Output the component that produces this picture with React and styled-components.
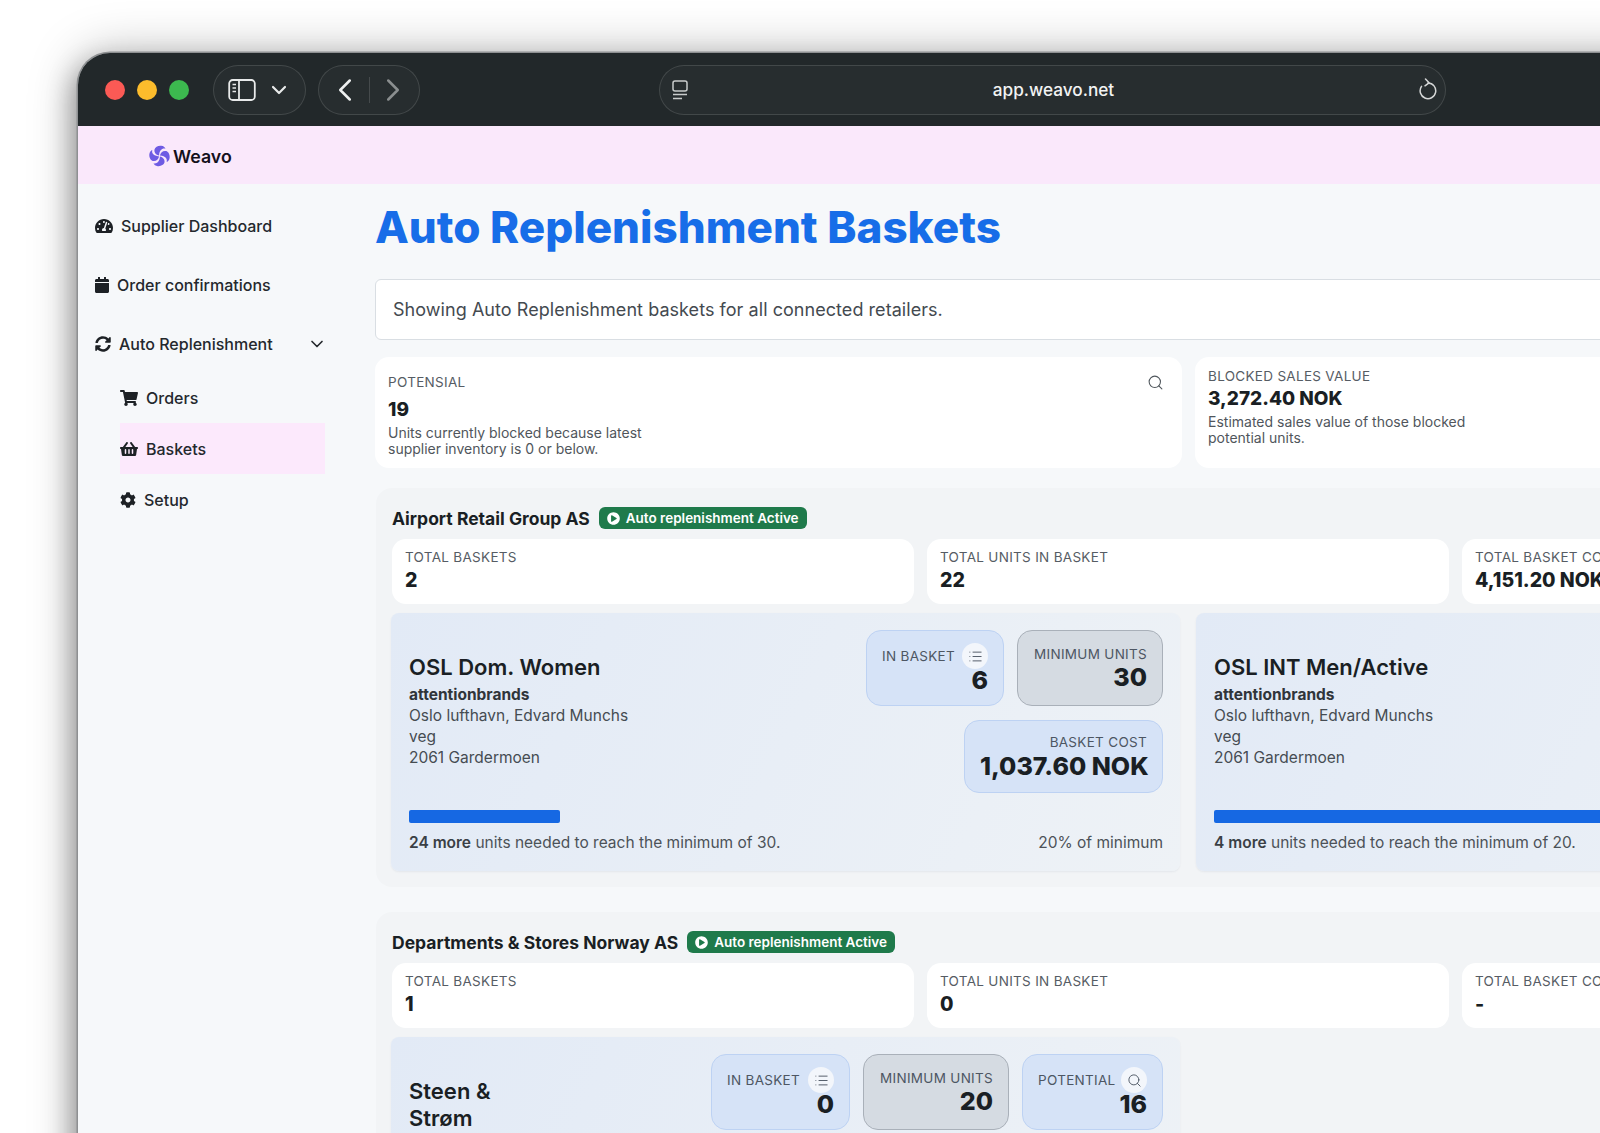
import React from 'react';
import styled, { createGlobalStyle } from 'styled-components';
import { ChevronDown, ChevronLeft, ChevronRight, List, Search } from 'lucide-react';
import { FaCalendar, FaCog, FaPlayCircle, FaShoppingBasket, FaShoppingCart, FaSyncAlt, FaTachometerAlt } from 'react-icons/fa';

const GlobalStyle = createGlobalStyle`
  html, body {
    margin: 0;
    padding: 0;
    background: #fff;
    font-family: Inter, "Noto Sans", sans-serif;
    color: #1c2126;
  }
`;

const Page = styled.div`
  width: 1600px;
  height: 1133px;
  overflow: hidden;
  box-sizing: border-box;
  padding: 53px 0 0 78px;
  background: #fff;
`;

const Browser = styled.div`
  width: 1960px;
  min-height: 1200px;
  border-radius: 32px 32px 0 0;
  box-shadow: 0 0 0 1.5px #8e9092, 0 0 50px rgba(0, 0, 0, 0.28), -6px 10px 26px rgba(0, 0, 0, 0.3);
  background: #f6f8fa;
  overflow: hidden;
`;

const TitleBar = styled.div`
  height: 73px;
  box-sizing: border-box;
  display: flex;
  align-items: center;
  padding-left: 27px;
  background: #22282a;
  color: #e8eaea;
`;

const Dot = styled.span`
  width: 20px;
  height: 20px;
  margin-right: 12px;
  border-radius: 50%;
  background: ${p => p.$color};
`;

const Pill = styled.div`
  height: 50px;
  box-sizing: border-box;
  display: flex;
  align-items: center;
  margin-left: ${p => p.$gap}px;
  width: ${p => p.$width}px;
  padding: 0 ${p => p.$pad}px;
  justify-content: space-between;
  border: 1px solid rgba(255, 255, 255, 0.13);
  border-radius: 25px;
  background: #272d2f;
`;

const NavArrow = styled.span`
  display: flex;
  margin: 0 -9px;
  color: ${p => p.$color};
`;

const NavDivider = styled.span`
  width: 1px;
  height: 26px;
  background: rgba(255, 255, 255, 0.14);
`;

const UrlText = styled.span`
  font-size: 17.2px;
  font-weight: 500;
  color: #f2f3f3;
`;

const ReloadSvg = styled.svg`
  margin: -2px -4px 0 0;
`;

const BrandBar = styled.div`
  height: 58px;
  box-sizing: border-box;
  padding: 2px 0 0 71px;
  display: flex;
  align-items: center;
  gap: 3px;
  background: #fae8fb;
`;

const BrandName = styled.span`
  font-size: 17.8px;
  font-weight: 600;
  color: #14101c;
`;

const Body = styled.div`
  display: flex;
`;

const Sidebar = styled.nav`
  width: 297px;
  flex: none;
  box-sizing: border-box;
  padding: 24px 0 0 17px;
`;

const NavItem = styled.div`
  width: 232px;
  height: 36px;
  margin-bottom: 23px;
  display: flex;
  align-items: center;
  gap: 8px;
  font-size: 16px;
  font-weight: 500;
  color: #24282d;
`;

const NavIcon = styled.span`
  display: flex;
  flex: none;
  color: #1d2125;

  svg {
    width: ${p => p.$width}px;
    height: 16px;
  }
`;

const NavChevron = styled(ChevronDown)`
  margin-left: auto;
`;

const SubList = styled.div`
  margin: -13px 0 0 25px;
`;

const SubItem = styled(NavItem)`
  width: 205px;
  height: 51px;
  margin: 0;
  background: ${p => (p.$active ? '#fce9fc' : 'transparent')};
`;

const Main = styled.main`
  flex: 1;
  min-width: 0;
`;

const Title = styled.h1`
  margin: 17px 0 26px;
  font-size: 44px;
  line-height: 52px;
  font-weight: 800;
  color: #176de8;
`;

const Notice = styled.div`
  height: 61px;
  box-sizing: border-box;
  display: flex;
  align-items: center;
  padding-left: 17px;
  margin-bottom: 17px;
  font-size: 18px;
  letter-spacing: 0.05px;
  color: #444a50;
  background: #fff;
  border: 1px solid #d9dee3;
  border-radius: 6px;
`;

const SummaryGrid = styled.div`
  display: grid;
  grid-template-columns: 807px 807px;
  gap: 13px;
  margin-bottom: 20px;
`;

const SummaryCard = styled.div`
  box-sizing: border-box;
  min-height: 111px;
  padding: 11px 13px;
  background: #fff;
  border-radius: 14px;
`;

const CardHead = styled.div`
  display: flex;
  justify-content: space-between;
  align-items: center;
  margin-bottom: ${p => p.$space || 0}px;
  color: #4f565c;
`;

const Label = styled.div`
  font-size: 13.5px;
  line-height: 16px;
  letter-spacing: 0.3px;
  white-space: nowrap;
  text-transform: uppercase;
  color: #565c64;
`;

const SummaryValue = styled.div`
  font-size: 19px;
  line-height: 28px;
  font-weight: 800;
  color: #1a1f24;
`;

const SummaryNote = styled.div`
  width: 285px;
  margin-top: 1px;
  font-size: 14px;
  line-height: 16px;
  color: #50565c;
`;

const SearchCircle = styled.span`
  width: 28px;
  height: 28px;
  display: flex;
  align-items: center;
  justify-content: center;
`;

const Group = styled.section`
  width: 1624px;
  box-sizing: border-box;
  margin: 0 0 25px 1px;
  padding: 19px 16px 16px;
  background: #f2f4f6;
  border-radius: 16px;
`;

const GroupHead = styled.div`
  height: 22px;
  display: flex;
  align-items: center;
  gap: 9px;
  margin-bottom: 10px;
`;

const GroupName = styled.h2`
  margin: 0;
  font-size: 17.5px;
  font-weight: 700;
  color: #1a1f24;
`;

const Badge = styled.span`
  height: 22px;
  display: flex;
  align-items: center;
  gap: 6px;
  padding: 0 8px;
  font-size: 13.5px;
  font-weight: 600;
  color: #fff;
  background: #1f7a4b;
  border-radius: 6px;
`;

const StatRow = styled.div`
  display: grid;
  grid-template-columns: repeat(3, 522px);
  gap: 13px;
  margin-bottom: 9px;
`;

const StatCard = styled.div`
  height: 65px;
  box-sizing: border-box;
  padding: 10px 13px;
  background: #fff;
  border-radius: 14px;
`;

const StatValue = styled.div`
  margin-top: 2px;
  font-size: 19.5px;
  line-height: 26px;
  font-weight: 800;
  color: #1a1f24;
`;

const BasketGrid = styled.div`
  display: grid;
  grid-template-columns: repeat(2, 789px);
  gap: 16px;
  margin-left: -1px;
`;

const BasketCard = styled.article`
  box-sizing: border-box;
  padding: 17px 17px 19px 18px;
  background: linear-gradient(115deg, #e2eaf6, #eef2f6);
  border-radius: 8px;
  box-shadow: 0 1px 2px rgba(60, 80, 110, 0.08);
`;

const BasketTop = styled.div`
  display: flex;
  justify-content: space-between;
  height: 163px;
`;

const BasketInfo = styled.div`
  padding-top: 24px;
  font-size: 15.5px;
  line-height: 21px;
  color: #464c52;
`;

const BasketName = styled.h3`
  margin: 0 0 3px;
  font-size: 22px;
  line-height: 27px;
  font-weight: 600;
  color: #1a1f24;
`;

const Brand = styled.div`
  font-weight: 700;
  color: #30353a;
`;

const Tiles = styled.div`
  flex: none;
  width: ${p => p.$width}px;
  display: flex;
  flex-wrap: wrap;
  justify-content: flex-end;
  align-content: flex-start;
  gap: 14px 13px;
`;

const Tile = styled.div`
  width: ${p => p.$width}px;
  height: ${p => (p.$short ? 73 : 76)}px;
  box-sizing: border-box;
  display: flex;
  flex-direction: column;
  justify-content: center;
  gap: ${p => (p.$icon ? 0 : p.$short ? 3 : 2)}px;
  padding: 0 15px;
  text-align: right;
  border-radius: 15px;
  border: 1px solid ${p => (p.$grey ? '#a9b0b9' : '#bdd2f3')};
  background: ${p => (p.$grey ? '#d5dbe2' : '#d6e3f7')};
`;

const TileHead = styled.div`
  height: 26px;
  margin-bottom: -2px;
  display: flex;
  align-items: center;
  justify-content: space-between;
`;

const TileLabel = styled(Label)`
  color: #4d5663;
`;

const TileIcon = styled.span`
  width: 26px;
  height: 26px;
  display: flex;
  align-items: center;
  justify-content: center;
  border-radius: 50%;
  color: #4d5663;
  background: #f3f6fb;
`;

const TileValue = styled.div`
  font-size: 25px;
  line-height: 26px;
  font-weight: 800;
  white-space: nowrap;
  color: #1a1f24;
`;

const Progress = styled.div`
  height: 13px;
  margin: 17px 0 11px;
`;

const ProgressFill = styled.div`
  height: 100%;
  background: #1668e3;
  border-radius: 2px;
`;

const BasketFoot = styled.div`
  display: flex;
  justify-content: space-between;
  font-size: 15.5px;
  line-height: 18px;
  color: #4c5258;

  b {
    font-weight: 600;
    color: #3a3f45;
  }
`;

const WeavoLogo = () => (
  <svg width="21" height="22" viewBox="0 0 24 24" fill="#6e5be3">
    {[0, 90, 180, 270].map(angle => (
      <path
        key={angle}
        transform={`rotate(${angle} 12 12)`}
        d="M11.500 11.500C8 10.800 5.600 8 6.300 4.500 7 1.800 10.500 0 14 .4c2.500.3 4.300 1.700 4.800 3.400-3.300-1-6.800 1-7.300 7.700Z"
      />
    ))}
  </svg>
);

const SidebarToggleIcon = () => (
  <svg width="28" height="22" viewBox="0 0 28 22" fill="none" stroke="#e8eaea" strokeWidth="1.8">
    <rect x="1.200" y="1" width="25.600" height="20" rx="3.500" />
    <path d="M11 1v20" />
    <path d="M4.500 5.500h3.500M4.500 9h3.500M4.500 12.500h3.500" strokeWidth="1.400" />
  </svg>
);

const ReaderIcon = () => (
  <svg width="16" height="20" viewBox="0 0 16 20" fill="none" stroke="#c9cccc" strokeWidth="1.500">
    <rect x="1" y="1" width="14" height="10" rx="2" />
    <path d="M1 14.500h14M1 18.500h9" />
  </svg>
);

const ReloadIcon = () => (
  <ReloadSvg width="18" height="22" viewBox="0 0 18 22" fill="none" stroke="#d4d6d6" strokeWidth="1.500" strokeLinecap="round" strokeLinejoin="round">
    <path d="M9 5a7.800 7.800 0 1 1-6.500 3.400" />
    <path d="M6.500 1 10 4.800 6 7.800" />
  </ReloadSvg>
);

const groups = [
  {
    name: 'Airport Retail Group AS',
    stats: [['Total baskets', '2'], ['Total units in basket', '22'], ['Total basket cost', '4,151.20 NOK']],
    baskets: [
      {
        name: 'OSL Dom. Women', tilesWidth: 297, more: 24, min: 30, percent: 20,
        tiles: [
          { label: 'In basket', value: '6', icon: 'list', width: 138 },
          { label: 'Minimum units', value: '30', grey: true, width: 146 },
          { label: 'Basket cost', value: '1,037.60 NOK', short: true, width: 199 },
        ],
      },
      {
        name: 'OSL INT Men/Active', tilesWidth: 297, more: 4, min: 20, percent: 80,
        tiles: [
          { label: 'In basket', value: '16', icon: 'list', width: 138 },
          { label: 'Minimum units', value: '20', grey: true, width: 146 },
          { label: 'Basket cost', value: '3,113.60 NOK', short: true, width: 199 },
        ],
      },
    ],
  },
  {
    name: 'Departments & Stores Norway AS',
    stats: [['Total baskets', '1'], ['Total units in basket', '0'], ['Total basket cost', '-']],
    baskets: [
      {
        name: <>Steen &<br />Strøm</>, tilesWidth: 452, more: 20, min: 20, percent: 0,
        tiles: [
          { label: 'In basket', value: '0', icon: 'list', width: 139 },
          { label: 'Minimum units', value: '20', grey: true, width: 146 },
          { label: 'Potential', value: '16', icon: 'search', width: 141 },
        ],
      },
    ],
  },
];

const Basket = ({ basket }) => (
  <BasketCard>
    <BasketTop>
      <BasketInfo>
        <BasketName>{basket.name}</BasketName>
        <Brand>attentionbrands</Brand>
        Oslo lufthavn, Edvard Munchs<br />veg<br />2061 Gardermoen
      </BasketInfo>
      <Tiles $width={basket.tilesWidth}>
        {basket.tiles.map(tile => (
          <Tile key={tile.label} $width={tile.width} $grey={tile.grey} $short={tile.short} $icon={tile.icon}>
            {tile.icon ? (
              <TileHead>
                <TileLabel>{tile.label}</TileLabel>
                <TileIcon>
                  {tile.icon === 'list' ? <List size={15} strokeWidth={1.5} /> : <Search size={15} strokeWidth={1.5} />}
                </TileIcon>
              </TileHead>
            ) : (
              <TileLabel>{tile.label}</TileLabel>
            )}
            <TileValue>{tile.value}</TileValue>
          </Tile>
        ))}
      </Tiles>
    </BasketTop>
    <Progress>
      <ProgressFill style={{ width: `${basket.percent}%` }} />
    </Progress>
    <BasketFoot>
      <span><b>{basket.more} more</b> units needed to reach the minimum of {basket.min}.</span>
      <span>{basket.percent}% of minimum</span>
    </BasketFoot>
  </BasketCard>
);

export default function App() {
  return (
    <Page>
      <GlobalStyle />
      <Browser>
        <TitleBar>
          <Dot $color="#fb5a55" />
          <Dot $color="#fcbc2c" />
          <Dot $color="#3cb94f" />
          <Pill $gap={12} $width={93} $pad={14}>
            <SidebarToggleIcon />
            <ChevronDown size={24} strokeWidth={2.2} />
          </Pill>
          <Pill $gap={12} $width={102} $pad={16}>
            <NavArrow $color="#eef0f0"><ChevronLeft size={38} strokeWidth={1.6} /></NavArrow>
            <NavDivider />
            <NavArrow $color="#8a8e8f"><ChevronRight size={38} strokeWidth={1.6} /></NavArrow>
          </Pill>
          <Pill $gap={239} $width={787} $pad={12}>
            <ReaderIcon />
            <UrlText>app.weavo.net</UrlText>
            <ReloadIcon />
          </Pill>
        </TitleBar>
        <BrandBar>
          <WeavoLogo />
          <BrandName>Weavo</BrandName>
        </BrandBar>
        <Body>
          <Sidebar>
            <NavItem><NavIcon $width={18}><FaTachometerAlt /></NavIcon>Supplier Dashboard</NavItem>
            <NavItem><NavIcon $width={14}><FaCalendar /></NavIcon>Order confirmations</NavItem>
            <NavItem><NavIcon $width={16}><FaSyncAlt /></NavIcon>Auto Replenishment<NavChevron size={20} /></NavItem>
            <SubList>
              <SubItem><NavIcon $width={18}><FaShoppingCart /></NavIcon>Orders</SubItem>
              <SubItem $active><NavIcon $width={18}><FaShoppingBasket /></NavIcon>Baskets</SubItem>
              <SubItem><NavIcon $width={16}><FaCog /></NavIcon>Setup</SubItem>
            </SubList>
          </Sidebar>
          <Main>
            <Title>Auto Replenishment Baskets</Title>
            <Notice>Showing Auto Replenishment baskets for all connected retailers.</Notice>
            <SummaryGrid>
              <SummaryCard>
                <CardHead>
                  <Label>Potensial</Label>
                  <SearchCircle><Search size={17} strokeWidth={1.5} /></SearchCircle>
                </CardHead>
                <SummaryValue>19</SummaryValue>
                <SummaryNote>Units currently blocked because latest supplier inventory is 0 or below.</SummaryNote>
              </SummaryCard>
              <SummaryCard>
                <CardHead $space={1}>
                  <Label>Blocked sales value</Label>
                </CardHead>
                <SummaryValue>3,272.40 NOK</SummaryValue>
                <SummaryNote>Estimated sales value of those blocked potential units.</SummaryNote>
              </SummaryCard>
            </SummaryGrid>
            {groups.map(group => (
              <Group key={group.name}>
                <GroupHead>
                  <GroupName>{group.name}</GroupName>
                  <Badge><FaPlayCircle size={13} />Auto replenishment Active</Badge>
                </GroupHead>
                <StatRow>
                  {group.stats.map(([label, value]) => (
                    <StatCard key={label}>
                      <Label>{label}</Label>
                      <StatValue>{value}</StatValue>
                    </StatCard>
                  ))}
                </StatRow>
                <BasketGrid>
                  {group.baskets.map((basket, index) => <Basket key={index} basket={basket} />)}
                </BasketGrid>
              </Group>
            ))}
          </Main>
        </Body>
      </Browser>
    </Page>
  );
}
